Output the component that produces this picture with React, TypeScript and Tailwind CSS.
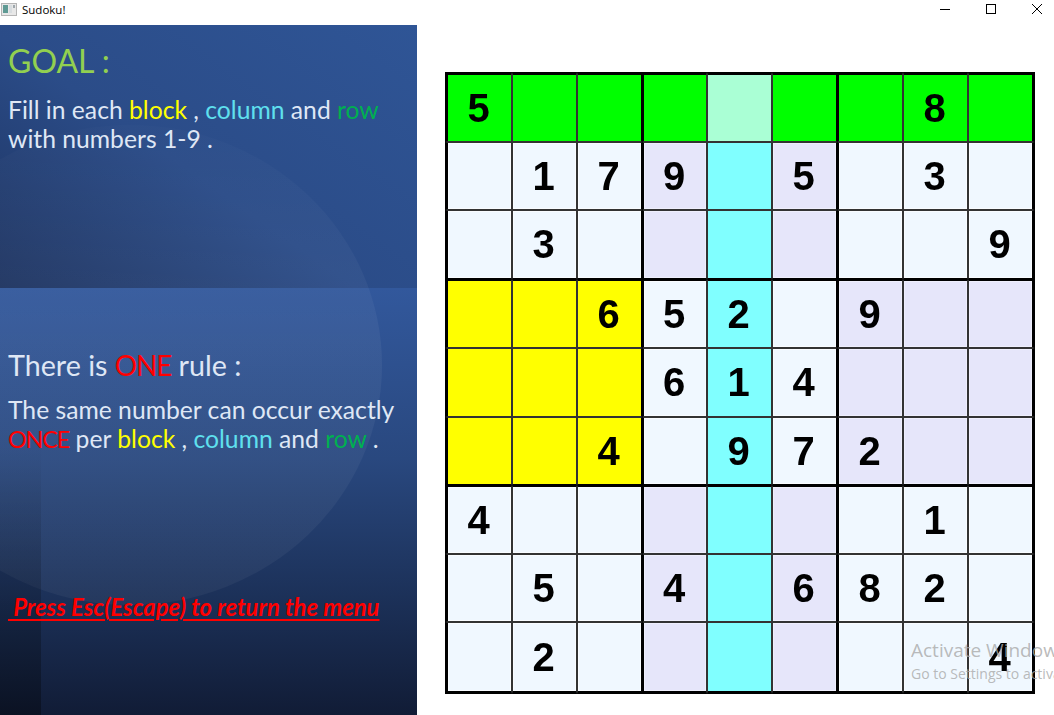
const cols = [
  'w-[67px]', 'w-[65px]', 'w-[65px]', 'w-[65px]', 'w-[65px]', 'w-[65px]', 'w-[66px]', 'w-[65px]', 'w-[67px]',
];
const rows = [
  'h-[70px]', 'h-[68px]', 'h-[69px]', 'h-[69px]', 'h-[69px]', 'h-[68px]', 'h-[69px]', 'h-[68px]', 'h-[72px]',
];

const digits = [
  '5......8.',
  '.179.5.3.',
  '.3......9',
  '..652.9..',
  '...614...',
  '..4.972..',
  '4......1.',
  '.5.4.682.',
  '.2......4',
];

function cellColor(r: number, c: number) {
  if (r === 0 && c === 4) return 'bg-[#aaffd5]';
  if (r === 0) return 'bg-[#00ff00]';
  if (c === 4) return 'bg-[#80ffff]';
  const br = Math.floor(r / 3);
  const bc = Math.floor(c / 3);
  if (br === 1 && bc === 0) return 'bg-[#ffff00]';
  if ((br + bc) % 2 === 1) return 'bg-[#e6e6fa] shadow-[inset_0_0_0_1px_rgba(255,255,255,0.35)]';
  return 'bg-[#f0f8ff] shadow-[inset_0_0_0_1px_rgba(255,255,255,0.6)]';
}

function Board() {
  return (
    <div className="flex flex-col w-[590px] h-[622px] mt-[47px] ml-[28px] bg-black">
      {digits.map((row, r) => (
        <div key={r} className={`flex ${rows[r]}`}>
          {row.split('').map((d, c) => (
            <div
              key={c}
              className={`flex items-center justify-center pr-[2px] pb-[1px] ${cols[c]} border border-[#333] ${cellColor(r, c)} ${c === 0 ? 'border-l-[3px] border-l-black' : ''} ${c === 8 ? 'border-r-[3px] border-r-black' : ''} ${r === 0 ? 'border-t-[3px] border-t-black' : ''} ${r === 8 ? 'border-b-[3px] border-b-black' : ''} ${c === 3 || c === 6 ? 'border-l-2 border-l-black' : ''} ${c === 2 || c === 5 ? 'border-r-black' : ''} ${r === 3 || r === 6 ? 'border-t-2 border-t-black' : ''} ${r === 2 || r === 5 ? 'border-b-black' : ''}`}
            >
              <span className="font-['Liberation_Sans',sans-serif] font-bold text-[40px] leading-none text-black blur-[0.5px]">
                {d === '.' ? '' : d}
              </span>
            </div>
          ))}
        </div>
      ))}
    </div>
  );
}

function InfoPanel() {
  return (
    <div className="relative w-[417px] h-[690px] shrink-0 overflow-hidden font-['Lato',sans-serif] text-[#dfe7f5]">
      {/* background slides */}
      <div className="absolute inset-x-0 top-0 h-[263px] bg-[linear-gradient(35deg,#1d3360_0%,#2b4c88_45%,#2f5596_100%)]" />
      <div className="absolute inset-x-0 top-[263px] bottom-0 bg-[linear-gradient(180deg,#32589c_0%,#29487f_40%,#1c3159_72%,#111c36_100%)]" />
      <div className="absolute left-[-122px] top-[100px] w-[504px] h-[480px] rounded-[50%] bg-[linear-gradient(180deg,rgba(255,255,255,0.01)_0%,rgba(255,255,255,0.05)_45%,rgba(255,255,255,0.045)_100%)]" />
      <div className="absolute left-0 bottom-0 w-[41px] h-[270px] bg-[linear-gradient(180deg,transparent,rgba(0,0,0,0.35))]" />

      <div className="relative flex flex-col h-full pl-[8px]">
        <h1 className="mt-[16px] text-[32px] leading-[40px] text-[#92d050]">GOAL :</h1>
        <p className="mt-[14px] text-[24.7px] leading-[29px]">
          Fill in each <span className="text-[#ffff00]">block</span> ,{' '}
          <span className="text-[#5fe0ee]">column</span> and{' '}
          <span className="text-[#00b050]">row</span>
          <br />
          with numbers 1-9 .
        </p>
        <h2 className="mt-[195px] text-[28.7px] leading-[34px]">
          There is <span className="text-[#ff0000] text-[28px] tracking-[-1.2px]">ONE</span> rule :
        </h2>
        <p className="mt-[13px] text-[24.7px] leading-[29px] whitespace-nowrap">
          The same number can occur exactly
          <br />
          <span className="text-[#ff0000] text-[23.5px] tracking-[-1.2px]">ONCE</span> per{' '}
          <span className="text-[#ffff00]">block</span> ,{' '}
          <span className="text-[#5fe0ee]">column</span> and{' '}
          <span className="text-[#00b050]">row</span> .
        </p>
        <p className="mt-[139px] text-[23.8px] leading-[28px] font-bold italic underline decoration-2 underline-offset-[3px] text-[#ff0000] whitespace-pre">
          {' Press Esc(Escape) to return the menu'}
        </p>
      </div>
    </div>
  );
}

export default function App() {
  return (
    <div className="w-[1054px] h-[715px] overflow-hidden bg-white flex flex-col relative">
      {/* title bar */}
      <div className="flex items-start pt-[1px] h-[25px] shrink-0 bg-white">
        <svg width="16" height="16" viewBox="0 0 16 16" className="ml-[1px]">
          <rect x="0.5" y="2.5" width="15" height="12" fill="#e8e8e8" stroke="#b5b5b5" />
          <rect x="2" y="4" width="5" height="8" fill="#5f9a94" />
          <rect x="8" y="4" width="3" height="8" fill="#d8dde0" />
          <rect x="12" y="4" width="2" height="3" fill="#9fa8ad" />
        </svg>
        <span className="ml-[5px] text-[11.5px] leading-[17px] text-black font-['Open_Sans',sans-serif]">Sudoku!</span>
        <div className="ml-auto -mr-[6px] flex items-start">
          <svg width="46" height="18" viewBox="0 0 46 18">
            <line x1="18" y1="8.5" x2="28" y2="8.5" stroke="#000" />
          </svg>
          <svg width="46" height="18" viewBox="0 0 46 18">
            <rect x="18.5" y="3.5" width="9" height="9" fill="none" stroke="#000" />
          </svg>
          <svg width="46" height="18" viewBox="0 0 46 18">
            <path d="M18 3 L28 13 M28 3 L18 13" stroke="#000" strokeWidth="1" />
          </svg>
        </div>
      </div>
      <div className="flex">
        <InfoPanel />
        <Board />
      </div>
      {/* windows watermark */}
      <div className="absolute left-[911px] top-[638px] w-[143px] overflow-hidden whitespace-nowrap font-['Open_Sans',sans-serif] text-[#a9a9a9]/80">
        <div className="text-[19px] leading-[25px]">Activate Windows</div>
        <div className="text-[14px] leading-[20px] mt-[1px]">Go to Settings to activate Windows.</div>
      </div>
    </div>
  );
}
